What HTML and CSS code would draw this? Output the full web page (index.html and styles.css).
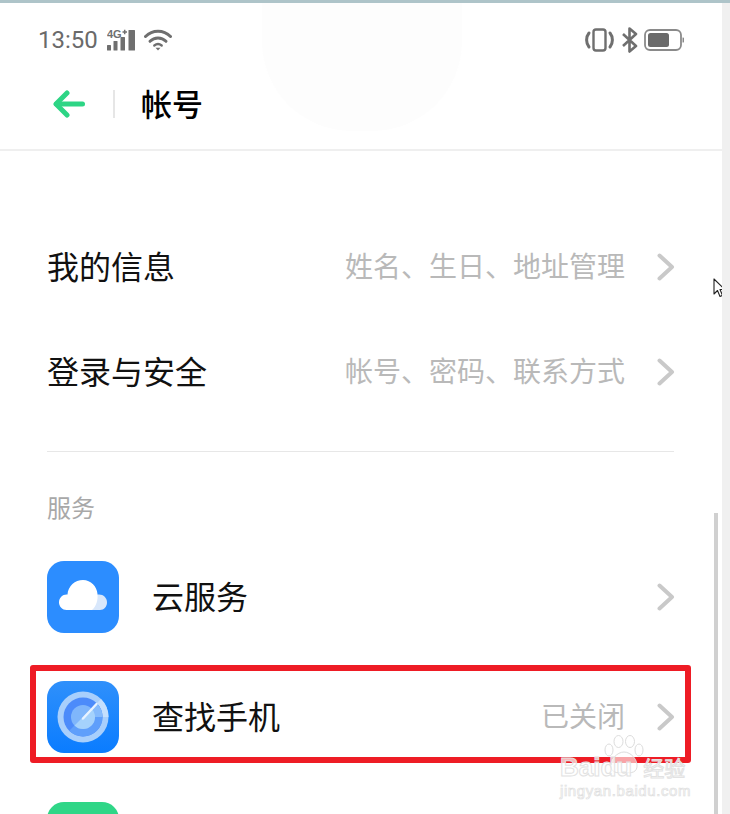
FILE: index.html
```html
<!DOCTYPE html>
<html>
<head>
    <meta charset="utf-8">
    <link rel="stylesheet" href="styles.css">
</head>
<body>
    <div class="top-line"></div>
    <div class="window">
        <div class="screen">
            <div class="ghost"></div>

            <div class="header">
                <div class="status-bar">
                    <div class="status-left">
                        <span class="clock">13:50</span>
                        <svg class="signal" width="29" height="22" viewBox="0 0 29 22">
                            <text class="signal-label" x="0" y="8.500">4G</text>
                            <path d="M15.500 3h4.500M17.700 0.800v4.500" stroke="#6f6f6f" stroke-width="1.500"/>
                            <rect x="0" y="16" width="4" height="5.500" rx="0.500" fill="#6f6f6f"/>
                            <rect x="6.500" y="12" width="4" height="9.500" rx="0.500" fill="#6f6f6f"/>
                            <rect x="13.500" y="8" width="4.500" height="13.500" rx="0.500" fill="#6f6f6f"/>
                            <rect x="21.500" y="1" width="6.500" height="20.500" rx="0.500" fill="#6f6f6f"/>
                        </svg>
                        <svg class="wifi" width="28" height="22" viewBox="0 0 28 22" fill="none" stroke="#6f6f6f" stroke-width="3" stroke-linecap="round">
                            <path d="M1.500 7.500C8.500 0.500 19.500 0.500 26.500 7.500"/>
                            <path d="M6 12.300C10.500 7.800 17.500 7.800 22 12.300"/>
                            <path d="M10.300 16.500C12.500 14.800 15.500 14.800 17.700 16.500" stroke-width="2.400"/>
                            <path d="M11.500 18.700L14 21.500L16.500 18.700Z" fill="#6f6f6f" stroke="none"/>
                        </svg>
                    </div>
                    <div class="status-right">
                        <svg class="vibrate" width="29" height="24" viewBox="0 0 29 24" fill="none" stroke="#6f6f6f">
                            <rect x="8.500" y="1.500" width="12" height="21" rx="2.500" stroke-width="2.400"/>
                            <path d="M4 5C0.800 9 0.800 15 4 19" stroke-width="3" stroke-linecap="round"/>
                            <path d="M25 5C28.200 9 28.200 15 25 19" stroke-width="3" stroke-linecap="round"/>
                        </svg>
                        <svg width="16" height="26" viewBox="0 0 16 26" fill="none" stroke="#6f6f6f" stroke-width="2.600" stroke-linejoin="round">
                            <path d="M1 7L14 19L7.500 24.500V1.500L14 7L1 19"/>
                        </svg>
                        <svg width="40" height="22" viewBox="0 0 40 22" fill="none">
                            <rect x="1" y="1" width="36" height="20" rx="5" stroke="#8a8a8a" stroke-width="1.800"/>
                            <rect x="4" y="4" width="21" height="14" rx="2.500" fill="#6a6a6a"/>
                            <path d="M38.500 8.500a2.500 2.500 0 0 1 0 5z" fill="#8a8a8a"/>
                        </svg>
                    </div>
                </div>
                <div class="toolbar">
                    <svg class="back" width="32" height="28" viewBox="0 0 32 28" fill="none" stroke="#2dd585" stroke-width="5" stroke-linecap="round" stroke-linejoin="round">
                        <path d="M14 3L3 14L14 25"/>
                        <path d="M3.500 14H29.500"/>
                    </svg>
                    <span class="toolbar-sep"></span>
                    <h1 class="title">帐号</h1>
                </div>
            </div>

            <div class="content">
                <div class="row row-plain">
                    <span class="row-title">我的信息</span>
                    <span class="row-value">姓名、生日、地址管理</span>
                    <svg class="chevron" width="18" height="28" viewBox="0 0 18 28" fill="none" stroke="#c9c9c9" stroke-width="4" stroke-linecap="round" stroke-linejoin="round"><path d="M2.500 2.500L15 14L2.500 25.500"/></svg>
                </div>
                <div class="row row-plain">
                    <span class="row-title">登录与安全</span>
                    <span class="row-value">帐号、密码、联系方式</span>
                    <svg class="chevron" width="18" height="28" viewBox="0 0 18 28" fill="none" stroke="#c9c9c9" stroke-width="4" stroke-linecap="round" stroke-linejoin="round"><path d="M2.500 2.500L15 14L2.500 25.500"/></svg>
                </div>

                <div class="divider"></div>
                <div class="section-label">服务</div>

                <div class="row row-app">
                    <span class="app-icon icon-cloud">
                        <svg width="72" height="72" viewBox="0 0 72 72">
                            <path d="M44 49H53C57 49 60 45.500 60 41.500C60 37 56.500 33.500 52 33.500C50 33.500 48.500 34 47 35L40 49Z" fill="#d8e7fb"/>
                            <path d="M19.500 49C15.500 49 12 45.500 12 41.500C12 37 15.500 33.500 19.500 33.500H20.500C21 25 28 19 36 19C44 19 50 25.500 50.500 33C51 39 49.500 45 45 49Z" fill="#fff"/>
                        </svg>
                    </span>
                    <span class="row-title">云服务</span>
                    <svg class="chevron" width="18" height="28" viewBox="0 0 18 28" fill="none" stroke="#c9c9c9" stroke-width="4" stroke-linecap="round" stroke-linejoin="round"><path d="M2.500 2.500L15 14L2.500 25.500"/></svg>
                </div>
                <div class="row row-app">
                    <span class="app-icon icon-radar">
                        <svg width="72" height="72" viewBox="0 0 72 72">
                            <circle cx="36" cy="36" r="25.500" fill="#a8cffc"/>
                            <path d="M36 36L54 18A25.500 25.500 0 0 1 61.500 36Z" fill="#c4dffd"/>
                            <circle cx="36" cy="36" r="19.500" fill="#4c8bfa"/>
                            <path d="M36 36L49.800 22.200A19.500 19.500 0 0 1 22.200 49.800Z" fill="#5f9ffb"/>
                            <path d="M36 36L49.800 22.200A19.500 19.500 0 0 1 55.500 36Z" fill="#86bbfc"/>
                            <circle cx="36" cy="36" r="12" fill="#7fb6fb"/>
                            <path d="M36 36L44.500 27.500A12 12 0 0 1 27.500 44.500Z" fill="#a5d2fc"/>
                            <path d="M36 37.500L49.500 23" stroke="#e8f3ff" stroke-width="2.400" stroke-linecap="round"/>
                        </svg>
                    </span>
                    <span class="row-title">查找手机</span>
                    <span class="row-value">已关闭</span>
                    <svg class="chevron" width="18" height="28" viewBox="0 0 18 28" fill="none" stroke="#c9c9c9" stroke-width="4" stroke-linecap="round" stroke-linejoin="round"><path d="M2.500 2.500L15 14L2.500 25.500"/></svg>
                </div>
                <div class="row row-app">
                    <span class="app-icon icon-green"></span>
                </div>
            </div>

            <div class="scroll-thumb"></div>
            <div class="red-box"></div>

            <div class="watermark">
                <svg class="paw" width="40" height="40" viewBox="0 0 40 40" fill="rgba(255,255,255,0.6)" stroke="#dcdcdc" stroke-width="1">
                    <ellipse cx="5" cy="15" rx="4" ry="6"/>
                    <ellipse cx="14.500" cy="6.500" rx="4.500" ry="6"/>
                    <ellipse cx="26" cy="6.500" rx="4.500" ry="6"/>
                    <ellipse cx="35" cy="15" rx="4" ry="6"/>
                    <path d="M20 17C13 17 6 25 7 32C8 39 16 38 20 37C24 38 32 39 33 32C34 25 27 17 20 17Z"/>
                </svg>
                <div class="wm-brand"><span>Baidu</span><span class="wm-cn">经验</span></div>
                <div class="wm-url">jingyan.baidu.com</div>
            </div>

            <svg class="cursor" width="14" height="20" viewBox="0 0 14 20">
                <path d="M1 1V16L4.500 12.500L7 18.500L9.500 17.500L7 11.500H12Z" fill="#fff" stroke="#222" stroke-width="1.100" stroke-linejoin="round"/>
            </svg>
        </div>
        <div class="gutter"></div>
    </div>
</body>
</html>
```

FILE: styles.css
```css
html, body {
    margin: 0;
    padding: 0;
}
body {
    width: 730px;
    height: 814px;
    overflow: hidden;
    background: #ffffff;
    font-family: "Noto Sans CJK SC", "Liberation Sans", sans-serif;
}
.top-line {
    height: 3px;
    background: #aec4c9;
}
.window {
    display: flex;
    height: 811px;
}
.screen {
    position: relative;
    width: 722px;
    overflow: hidden;
    background: #ffffff;
}
.gutter {
    width: 8px;
    background: #f0f0f0;
}
.ghost {
    position: absolute;
    left: 262px;
    top: 0;
    width: 200px;
    height: 128px;
    background: #fdfdfd;
    border-radius: 0 0 90px 90px;
}
.header {
    position: relative;
    height: 146px;
    border-bottom: 2px solid #efefef;
}
.status-bar {
    display: flex;
    justify-content: space-between;
    align-items: center;
    height: 24px;
    padding: 25px 38px 0 38px;
}
.status-left {
    display: flex;
    align-items: center;
}
.status-right {
    display: flex;
    align-items: center;
    gap: 6px;
}
.clock {
    width: 59px;
    font-family: Roboto, "Liberation Sans", sans-serif;
    font-size: 24px;
    line-height: 24px;
    white-space: nowrap;
    color: #6a6a6a;
}
.signal {
    margin-left: 10px;
}
.signal-label {
    font-family: "Liberation Sans", sans-serif;
    font-size: 11px;
    font-weight: bold;
    fill: #6f6f6f;
}
.wifi {
    margin-left: 8px;
}
.vibrate {
    margin-right: 2px;
}
.toolbar {
    display: flex;
    align-items: center;
    height: 62px;
    margin-top: 21px;
    padding-left: 53px;
}
.toolbar-sep {
    width: 2px;
    height: 28px;
    margin-left: 28px;
    background: #e6e6e6;
}
.title {
    margin: -4px 0 0 26px;
    font-size: 31px;
    font-weight: 500;
    color: #000000;
}
.content {
    position: relative;
    padding-top: 63px;
}
.row {
    display: flex;
    align-items: center;
    padding: 0 47px 0 47px;
}
.row-plain {
    height: 105px;
}
.row-app {
    height: 120px;
}
.row-title {
    flex: 1;
    margin-top: -4px;
    font-size: 32px;
    color: #111111;
}
.row-value {
    margin-top: -4px;
    font-size: 28px;
    color: #b9b9b9;
}
.chevron {
    margin-left: 32px;
}
.divider {
    height: 1px;
    margin: 27px 48px 0 47px;
    background: #e7e7e7;
}
.section-label {
    height: 85px;
    padding: 38px 0 0 47px;
    box-sizing: border-box;
    font-size: 24px;
    line-height: 34px;
    color: #a8a8a8;
}
.app-icon {
    flex: none;
    display: block;
    width: 72px;
    height: 72px;
    margin-right: 33px;
    border-radius: 17px;
}
.icon-cloud {
    background: #2c8dff;
}
.icon-radar {
    background: linear-gradient(180deg, #2f90fb 0%, #0a7cff 100%);
}
.icon-green {
    margin-top: 2px;
    background: #2fd687;
}
.scroll-thumb {
    position: absolute;
    left: 714px;
    top: 510px;
    width: 4px;
    height: 301px;
    background: #d0d0d0;
}
.red-box {
    position: absolute;
    left: 30px;
    top: 662px;
    width: 661px;
    height: 98px;
    box-sizing: border-box;
    border: 6px solid #ee1c25;
    border-radius: 3px;
}
.watermark {
    position: absolute;
    left: 558px;
    top: 732px;
    width: 136px;
    height: 66px;
}
.paw {
    position: absolute;
    left: 46px;
    top: 0;
}
.wm-brand {
    position: absolute;
    left: 2px;
    top: 21px;
    height: 22px;
    font-family: "Liberation Sans", sans-serif;
    font-size: 26px;
    font-weight: bold;
    line-height: 22px;
    white-space: nowrap;
    color: rgba(255, 255, 255, 0.7);
    -webkit-text-stroke: 1px #e2e2e2;
}
.wm-cn {
    margin-left: 11px;
    font-family: "Noto Sans CJK SC", sans-serif;
    font-size: 21px;
    font-weight: 400;
}
.wm-url {
    position: absolute;
    left: 2px;
    top: 48px;
    font-family: "Liberation Sans", sans-serif;
    font-size: 15px;
    line-height: 15px;
    letter-spacing: 0.600px;
    white-space: nowrap;
    color: rgba(255, 255, 255, 0.8);
    -webkit-text-stroke: 0.700px #dedede;
}
.cursor {
    position: absolute;
    left: 713px;
    top: 275px;
}
```
